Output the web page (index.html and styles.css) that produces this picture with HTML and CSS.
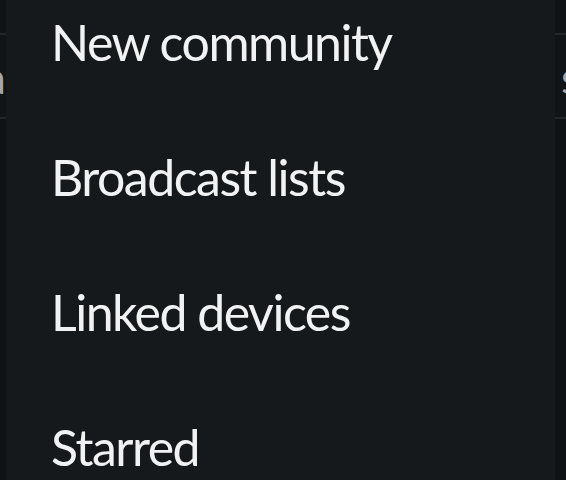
FILE: index.html
```html
<!DOCTYPE html>
<html>
<head>
<meta charset="utf-8">
<link rel="stylesheet" href="styles.css">
</head>
<body>
<div class="screen">
  <div class="under">
    <div class="under-row first"></div>
    <div class="under-row tab"><span class="frag-left">a</span><span class="frag-right">s</span></div>
    <div class="under-row body"><span class="frag-left low">r</span></div>
  </div>
  <ul class="menu">
    <li class="item">New community</li>
    <li class="item">Broadcast lists</li>
    <li class="item">Linked devices</li>
    <li class="item">Starred</li>
  </ul>
</div>
</body>
</html>
```
FILE: styles.css
```css
html, body {
  margin: 0;
  padding: 0;
  background: #101316;
}
.screen {
  position: relative;
  width: 566px;
  height: 480px;
  overflow: hidden;
  font-family: "Lato", "Noto Sans", sans-serif;
}
.under {
  display: flex;
  flex-direction: column;
  height: 100%;
}
.under-row {
  position: relative;
}
.under-row.first {
  height: 33px;
  border-bottom: 2px solid #24272a;
}
.under-row.tab {
  height: 82px;
  border-bottom: 2px solid #24272a;
  background: #111417;
}
.under-row.body {
  flex: 1;
  background: #0f1215;
}
.frag-left, .frag-right {
  position: absolute;
  top: 20px;
  font-size: 44px;
  line-height: 44px;
  color: #a4a7a9;
}
.frag-left { left: -16px; }
.frag-right { right: -14px; }
.frag-left.low { top: 292px; left: -18px; color: #8a8d90; }
.menu {
  position: absolute;
  left: 6px;
  right: 11px;
  top: -30px;
  bottom: -30px;
  margin: 0;
  padding: 0;
  list-style: none;
  background: #16191c;
  display: flex;
  flex-direction: column;
}
.item {
  height: 135px;
  flex: none;
  display: flex;
  align-items: center;
  padding-left: 45px;
  font-size: 50px;
  letter-spacing: -1.5px;
  color: #f1f2f3;
  white-space: nowrap;
}
.item:first-child { margin-top: 4px; }
```
